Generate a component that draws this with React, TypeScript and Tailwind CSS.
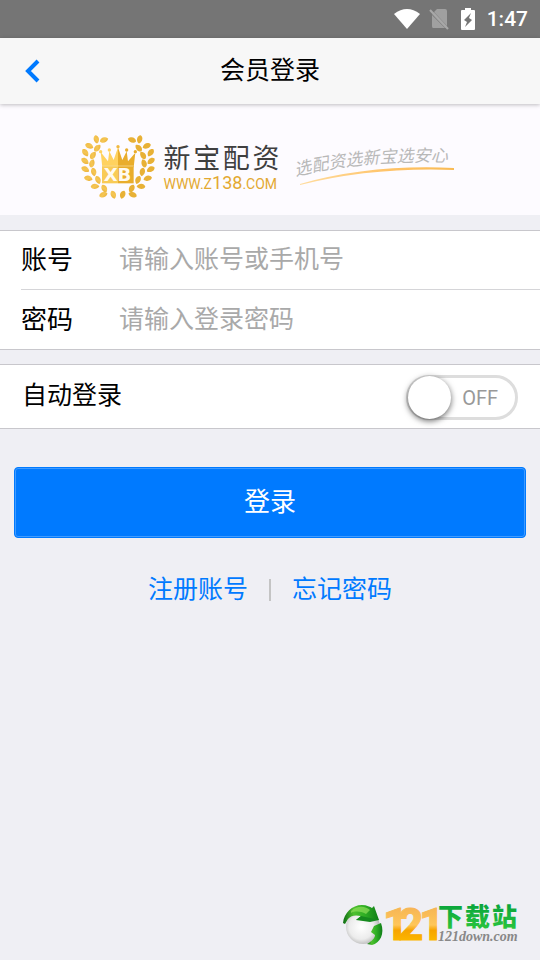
import { useState } from 'react';

type Leaf = { x: number; y: number; angle: number };

// Leaves of the left half of the wreath; the right half is the mirror image.
const LEAVES: Leaf[] = [
  { x: 76, y: 40, angle: 75 },
  { x: 55, y: 60, angle: 20 },
  { x: 43, y: 80, angle: 50 },
  { x: 42, y: 105, angle: 35 },
  { x: 43, y: 130, angle: 25 },
  { x: 52, y: 157, angle: 10 },
  { x: 72, y: 181, angle: -5 },
  { x: 97, y: 206, angle: -20 },
  { x: 99, y: 42, angle: -20 },
  { x: 79, y: 66, angle: -50 },
  { x: 66, y: 88, angle: -60 },
  { x: 63, y: 112, angle: -75 },
  { x: 68, y: 138, angle: 75 },
  { x: 81, y: 162, angle: 65 },
  { x: 100, y: 188, angle: 60 },
  { x: 127, y: 206, angle: 68 },
];

function Wreath({ fill }: { fill: string }) {
  return (
    <g fill={fill}>
      {LEAVES.map((leaf) => (
        <path
          key={`${leaf.x}-${leaf.y}`}
          d="M-13 0C-9 -11 7 -11 13 1C6 10 -9 10 -13 0Z"
          transform={`translate(${leaf.x} ${leaf.y}) rotate(${leaf.angle})`}
        />
      ))}
    </g>
  );
}

function CrownLogo() {
  return (
    <svg viewBox="30 27 222 198" className="h-[66px] w-[74px] shrink-0" aria-hidden="true">
      <defs>
        <linearGradient id="leafLeft" x1="0" y1="0" x2="1" y2="1">
          <stop offset="0" stopColor="#efb83f" />
          <stop offset="0.5" stopColor="#f5c655" />
          <stop offset="1" stopColor="#e8ad33" />
        </linearGradient>
      </defs>
      <Wreath fill="url(#leafLeft)" />
      <g transform="translate(282 0) scale(-1 1)">
        <Wreath fill="#e8b136" />
      </g>
      <path d="M94 124L89 78L111 106L115 76L128 102L141 64V124Z" fill="#ffd25f" />
      <path d="M141 64L154 102L167 76L171 106L193 80L188 124H141Z" fill="#e9ad2c" />
      <circle cx="89" cy="77" r="5" fill="#ffd25f" />
      <circle cx="115" cy="72" r="5" fill="#ffd25f" />
      <circle cx="141" cy="62" r="5" fill="#f0b940" />
      <circle cx="167" cy="72" r="5" fill="#e9ad2c" />
      <circle cx="193" cy="77" r="5" fill="#e9ad2c" />
      <path d="M93 119H141V172H93Z" fill="#f9cb56" />
      <path d="M141 119H188V172H141Z" fill="#e9ad2c" />
      <path d="M93 120H188" stroke="#fbe3a6" strokeWidth="2" />
      <text x="98" y="165" fill="#fffaf0" fontSize="54" fontWeight="700" fontFamily="DejaVu Sans, sans-serif">
        XB
      </text>
    </svg>
  );
}

function Slogan() {
  return (
    <svg viewBox="-8 -12 184 62" className="h-[62px] w-[184px] shrink-0">
      <defs>
        <path id="sloganLine" d="M0 34Q75 15 185 21" />
        <linearGradient id="swoosh" x1="0" x2="1" y1="0" y2="0">
          <stop offset="0" stopColor="#ffdc9e" />
          <stop offset="0.6" stopColor="#ffc266" />
          <stop offset="1" stopColor="#f9bb55" />
        </linearGradient>
      </defs>
      <text fontSize="17" fontStyle="italic" fontWeight="400" fill="#b8b8b8" fontFamily="Noto Sans CJK SC, sans-serif">
        <textPath href="#sloganLine">选配资选新宝选安心</textPath>
      </text>
      <path d="M4 42Q74 22 158 26V28Q76 25 4 43Z" fill="url(#swoosh)" />
    </svg>
  );
}

function Banner() {
  return (
    <section className="flex h-[111px] items-center justify-center bg-[#fdfbff] pt-4 pl-3">
      <CrownLogo />
      <div className="ml-[9px] flex w-[116px] shrink-0 flex-col">
        <div className="flex justify-between pt-0.5 text-[27px] leading-[30px] text-[#3f3f3f]">
          <span>新</span>
          <span>宝</span>
          <span>配</span>
          <span>资</span>
        </div>
        <p className="text-[14px] leading-[18px] whitespace-nowrap text-[#e3a931]">
          WWW.Z<span className="text-[18px]">138</span>.COM
        </p>
      </div>
      <div className="ml-2 pb-3.5">
        <Slogan />
      </div>
    </section>
  );
}

function StatusBar() {
  return (
    <div className="flex h-[38px] items-center justify-end bg-[#757575] pr-3 text-white">
      <svg viewBox="0 0 26 20" className="h-5 w-[26px]" aria-hidden="true">
        <path d="M0 5Q13 -5 26 5L13 20Z" fill="#fff" />
      </svg>
      <svg viewBox="0 0 20 22" className="ml-[9px] h-[22px] w-5" aria-hidden="true">
        <path d="M8 1H16Q18 1 18 3V18L5 4ZM3 7L16 20H4Q3 20 3 18Z" fill="#a0a0a0" />
        <path d="M3 6L5 4L18 18V20H16Z" fill="#959595" />
        <path d="M1 2L19 21" stroke="#a8a8a8" strokeWidth="2" />
      </svg>
      <svg viewBox="0 0 14 22" className="ml-3 h-[22px] w-[14px]" aria-hidden="true">
        <path d="M4 0H10V2H13Q14 2 14 3V21Q14 22 13 22H1Q0 22 0 21V3Q0 2 1 2H4Z" fill="#fff" />
        <path d="M10 5L3 12L6 14L4 19L11 12L8 10Z" fill="#757575" />
      </svg>
      <time className="ml-3 text-[21px] leading-6 font-medium">1:47</time>
    </div>
  );
}

function AutoLoginSwitch() {
  const [on, setOn] = useState(false);
  return (
    <div className="relative h-[45px] w-[112px]">
      <input
        id="auto"
        type="checkbox"
        role="switch"
        checked={on}
        onChange={(e) => setOn(e.target.checked)}
        className="peer block h-full w-full cursor-pointer appearance-none rounded-full border-[3px] border-[#dddddd] bg-white checked:border-[#007aff]"
      />
      <span className="pointer-events-none absolute top-px left-0.5 size-[43px] rounded-full bg-white shadow-[0_2px_6px_rgba(0,0,0,0.6)] peer-checked:left-[67px]" />
      <span className="pointer-events-none absolute inset-y-0 right-5 flex items-center text-[20px] leading-6 text-[#999999] peer-checked:right-auto peer-checked:left-5">
        {on ? 'ON' : 'OFF'}
      </span>
    </div>
  );
}

function Watermark() {
  return (
    <svg viewBox="0 -8 180 54" className="h-[54px] w-[180px]" role="img" aria-label="121下载站">
      <defs>
        <radialGradient id="ball" cx="0.45" cy="0.5" r="0.6">
          <stop offset="0" stopColor="#ffffff" />
          <stop offset="0.6" stopColor="#ececec" />
          <stop offset="1" stopColor="#a8a8a8" />
        </radialGradient>
        <linearGradient id="ribbon" x1="0" y1="0" x2="1" y2="0">
          <stop offset="0" stopColor="#0c6b12" />
          <stop offset="0.3" stopColor="#4fc02f" />
          <stop offset="0.6" stopColor="#2fae24" />
          <stop offset="1" stopColor="#0f7d18" />
        </linearGradient>
        <linearGradient id="gold" x1="0" y1="0" x2="0" y2="1">
          <stop offset="0" stopColor="#f2ad52" />
          <stop offset="0.5" stopColor="#ffc65a" />
          <stop offset="0.6" stopColor="#f7a400" />
          <stop offset="1" stopColor="#ffc800" />
        </linearGradient>
        <linearGradient id="green" x1="0" y1="0" x2="0" y2="1">
          <stop offset="0" stopColor="#009b3a" />
          <stop offset="1" stopColor="#2fca3e" />
        </linearGradient>
      </defs>
      <circle cx="21" cy="23" r="17" fill="url(#ball)" />
      <path d="M1 19C2 9 10 1 20 1C25 1 28 3 30 4L32 2L37 16L14 16L19 12C14 11 9 11 6 15L3 20Z" fill="url(#ribbon)" />
      <path d="M14 16L19 12L37 16L28 18Z" fill="#168a1e" />
      <path d="M9 7C15 1 24 2 28 6L24 10C18 7 13 7 9 9Z" fill="#8ede5a" opacity="0.7" />
      <path d="M39 19C43 30 38 39 30 41L25 40C30 37 33 34 33 31L29 28L32 22Z" fill="url(#ribbon)" />
      <g
        fill="url(#gold)"
        stroke="url(#gold)"
        strokeWidth="1"
        fontSize="44"
        fontWeight="800"
        fontFamily="Roboto, sans-serif"
      >
        <text x="41 56 77" y="36">121</text>
      </g>
      <text x="96 123 150" y="22" fill="url(#green)" fontSize="25" fontWeight="900" fontFamily="Noto Sans CJK SC, sans-serif">
        下载站
      </text>
      <text x="96" y="37" fill="#888888" fontSize="14" fontWeight="700" fontStyle="italic" fontFamily="Liberation Serif, serif">
        121down.com
      </text>
    </svg>
  );
}

export default function App() {
  return (
    <div className="flex min-h-screen flex-col bg-[#efeff4] font-[Roboto,'Noto_Sans_CJK_SC',sans-serif] text-[25px] leading-9 text-black">
      <StatusBar />
      <header className="relative z-10 grid h-[66px] grid-cols-[80px_1fr_80px] items-center bg-[#f7f7f7] shadow-[0_1px_4px_rgba(0,0,0,0.25)]">
        <button type="button" aria-label="返回" className="flex h-full items-center pl-6">
          <svg viewBox="0 0 16 24" className="h-6 w-4" fill="none" stroke="#007aff" strokeWidth="4" aria-hidden="true">
            <path d="M14 2L4 12L14 22" />
          </svg>
        </button>
        <h1 className="text-center">会员登录</h1>
      </header>
      <Banner />
      <main>
        <form onSubmit={(e) => e.preventDefault()}>
          <div className="mt-[15px] border-y border-[#c8c7cc] bg-white">
            <div className="ml-[21px] flex h-[59px] items-center border-b border-[#d5d5d8]">
              <label htmlFor="account" className="w-[98px] shrink-0 text-[26px]">账号</label>
              <input id="account" type="text" placeholder="请输入账号或手机号" className="min-w-0 flex-1 outline-none placeholder:text-[#a9a9a9]" />
            </div>
            <div className="ml-[21px] flex h-[59px] items-center">
              <label htmlFor="password" className="w-[98px] shrink-0 text-[26px]">密码</label>
              <input id="password" type="password" placeholder="请输入登录密码" className="min-w-0 flex-1 outline-none placeholder:text-[#a9a9a9]" />
            </div>
          </div>
          <div className="mt-[14px] flex h-[65px] items-center justify-between border-y border-[#c8c7cc] bg-white px-[22px] pt-0.5">
            <label htmlFor="auto" className="pb-1">自动登录</label>
            <AutoLoginSwitch />
          </div>
          <div className="mt-[38px] px-[14px]">
            <button type="submit" className="h-[71px] w-full rounded-sm border border-[#007aff] bg-[#007aff] pb-0.5 text-[26px] text-white shadow-[inset_0_0_0_1px_rgba(255,255,255,0.25)]">
              登录
            </button>
          </div>
        </form>
        <nav className="mt-[34px] flex items-center justify-center">
          <a href="#register" className="text-[#007aff]">注册账号</a>
          <span className="mx-[21px] h-[22px] w-0.5 bg-[#c4c4c4]" />
          <a href="#forgot" className="text-[#007aff]">忘记密码</a>
        </nav>
      </main>
      <footer className="mt-auto flex justify-end pr-[18px] pb-[10px]">
        <Watermark />
      </footer>
    </div>
  );
}
